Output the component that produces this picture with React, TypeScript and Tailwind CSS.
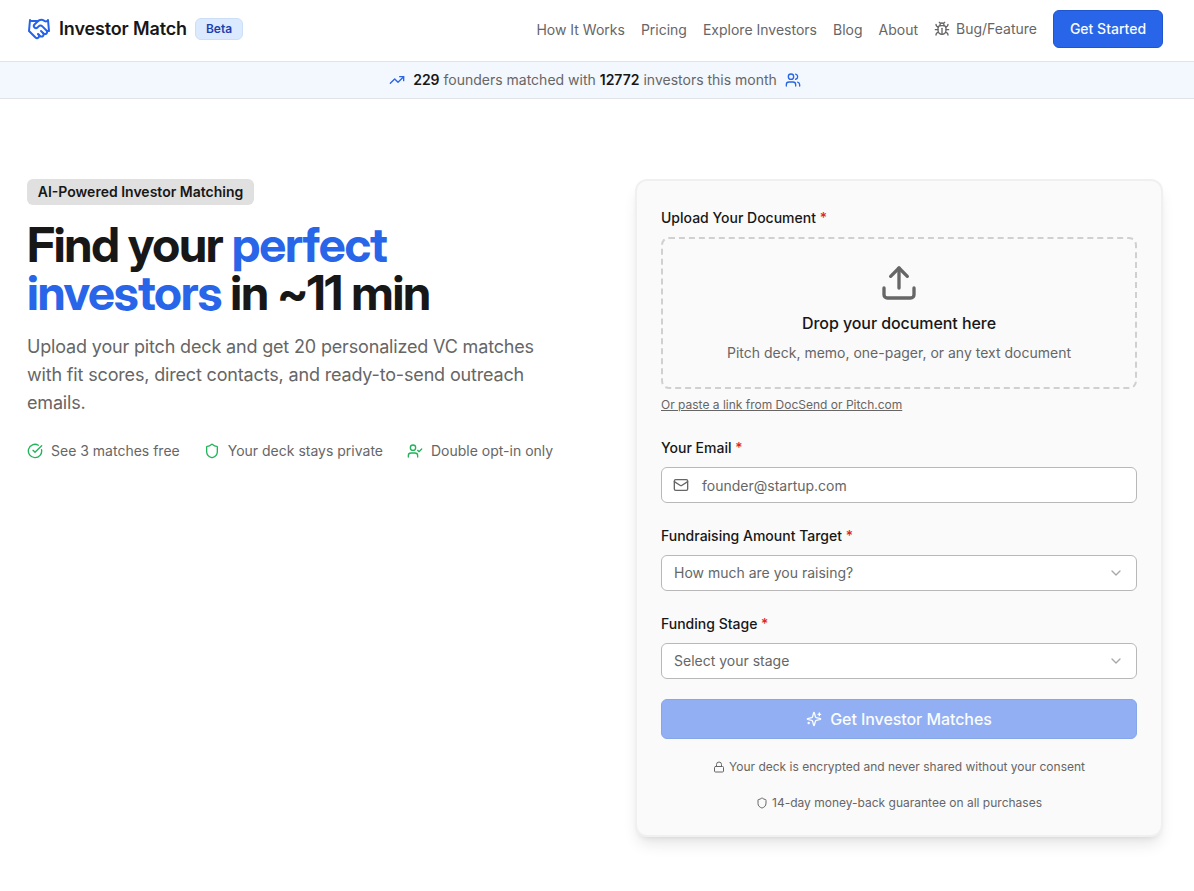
import React from "react";
import {
  ChevronDown,
  CircleCheckBig,
  Handshake,
  Lock,
  Mail,
  Shield,
  TrendingUp,
  Upload,
  UserCheck,
  Users,
} from "lucide-react";

const links = ["How It Works", "Pricing", "Explore Investors", "Blog", "About"];

function StrokeIcon({ paths }: { paths: string[] }) {
  return (
    <svg
      viewBox="0 0 24 24"
      fill="none"
      stroke="currentColor"
      strokeWidth="2"
      strokeLinecap="round"
      strokeLinejoin="round"
      className="size-4 shrink-0"
    >
      {paths.map((d) => (
        <path key={d} d={d} />
      ))}
    </svg>
  );
}

const bugPaths = [
  "m8 2 1.88 1.88",
  "M14.12 3.88 16 2",
  "M9 7.13v-1a3.003 3.003 0 1 1 6 0v1",
  "M12 20c-3.3 0-6-2.7-6-6v-3a4 4 0 0 1 4-4h4a4 4 0 0 1 4 4v3c0 3.3-2.7 6-6 6",
  "M12 20v-9",
  "M6.53 9C4.6 8.8 3 7.1 3 5",
  "M6 13H2",
  "M3 21c0-2.1 1.7-3.9 3.8-4",
  "M20.97 5c0 2.1-1.6 3.8-3.5 4",
  "M22 13h-4",
  "M17.2 17c2.1.1 3.8 1.9 3.8 4",
];

const sparklePaths = [
  "M9.937 15.5A2 2 0 0 0 8.5 14.063l-6.135-1.582a.5.5 0 0 1 0-.962L8.5 9.936A2 2 0 0 0 9.937 8.5l1.582-6.135a.5.5 0 0 1 .963 0L14.063 8.5A2 2 0 0 0 15.5 9.937l6.135 1.581a.5.5 0 0 1 0 .964L15.5 14.063a2 2 0 0 0-1.437 1.437l-1.582 6.135a.5.5 0 0 1-.963 0z",
  "M20 3v4",
  "M22 5h-4",
  "M4 17v2",
  "M5 18H3",
];

function Header() {
  return (
    <header className="flex h-[62px] items-center justify-between border-b border-[#dfe3e8] pr-[31px] pb-[3px] pl-[27px]">
      <div className="flex items-center gap-2">
        <Handshake className="size-6 text-[#2563eb]" strokeWidth={2} />
        <span className="text-lg font-semibold tracking-[-0.14px]">Investor Match</span>
        <span className="flex h-[22px] items-center rounded-md border border-[#cddff7] bg-[#dbeafe] px-2.5 text-xs font-semibold text-[#1e40af]">
          Beta
        </span>
      </div>
      <nav className="flex items-center gap-4 text-sm text-[#666]">
        {links.map((l) => (
          <a key={l} className="pt-0.5">
            {l}
          </a>
        ))}
        <a className="flex items-center gap-1.5">
          <StrokeIcon paths={bugPaths} />
          Bug/Feature
        </a>
        <button className="h-[38px] w-[110px] rounded-md border border-[#1f56cf] bg-[#2865e8] text-sm font-medium text-[#f8fafc]">
          Get Started
        </button>
      </nav>
    </header>
  );
}

function Stats() {
  return (
    <div className="flex h-[37px] items-center justify-center gap-2 border-b border-[#dfe3e8] bg-[#f3f7fe] pr-1 text-sm text-[#666]">
      <TrendingUp className="size-4 text-[#2865e8]" />
      <span>
        <b className="font-semibold text-[#171717]">229</b> founders matched with{" "}
        <b className="font-semibold text-[#171717]">12772</b> investors this month
      </span>
      <Users className="size-4 text-[#2865e8]" />
    </div>
  );
}

function Hero() {
  return (
    <section className="w-[528px]">
      <div className="flex h-[26px] w-[227px] items-center justify-center rounded-md bg-[#e0e0e0] text-sm font-semibold">
        AI-Powered Investor Matching
      </div>
      <h1 className="mt-4 font-['Inter_Display',Inter,sans-serif] text-5xl leading-[48px] font-bold tracking-[-0.025em]">
        Find your <span className="text-[#2865e8]">perfect</span>
        <br />
        <span className="text-[#2865e8]">investors</span> in ~11 min
      </h1>
      <p className="mt-4 text-lg leading-7 tracking-[-0.165px] text-[#666]">
        Upload your pitch deck and get 20 personalized VC matches
        <br />
        with fit scores, direct contacts, and ready-to-send outreach
        <br />
        emails.
      </p>
      <ul className="mt-6 flex gap-6 text-sm whitespace-nowrap text-[#666]">
        <li className="flex items-center gap-2">
          <CircleCheckBig className="size-4 text-[#22b35a]" />
          See 3 matches free
        </li>
        <li className="flex items-center gap-2">
          <Shield className="size-4 text-[#22b35a]" />
          Your deck stays private
        </li>
        <li className="flex items-center gap-2">
          <UserCheck className="size-4 text-[#22b35a]" />
          Double opt-in only
        </li>
      </ul>
    </section>
  );
}

function Label({ children }: { children: React.ReactNode }) {
  return (
    <div className="text-sm leading-5 font-medium">
      {children} <span className="text-[#dc2626]">*</span>
    </div>
  );
}

function Select({ text }: { text: string }) {
  return (
    <div className="mt-[9px] flex h-9 items-center justify-between rounded-md border border-[#b8b8b8] bg-white px-3 text-sm text-[#666]">
      {text}
      <ChevronDown className="size-4 text-[#a8a8a8]" />
    </div>
  );
}

function MatchForm() {
  return (
    <section className="h-[658px] w-[528px] rounded-xl border-2 border-[#f0f0f0] bg-[#fafafa] px-6 pt-[27px] shadow-[0_10px_15px_-3px_rgba(0,0,0,0.1),0_4px_6px_-4px_rgba(0,0,0,0.1)]">
      <Label>Upload Your Document</Label>
      <div className="mt-[9px] flex h-[152px] flex-col items-center rounded-lg border-2 border-dashed border-[#d0d0d0] pt-6">
        <Upload className="size-10 text-[#666]" />
        <div className="mt-2 text-base leading-6 font-medium tracking-[-0.07px]">
          Drop your document here
        </div>
        <div className="mt-2 text-sm leading-5 text-[#666]">
          Pitch deck, memo, one-pager, or any text document
        </div>
      </div>
      <div className="mt-2 text-xs leading-4 text-[#666] underline">
        Or paste a link from DocSend or Pitch.com
      </div>
      <div className="mt-[25px]">
        <Label>Your Email</Label>
        <div className="mt-[9px] flex h-9 items-center gap-[13px] rounded-md border border-[#b8b8b8] bg-white px-[11px] text-sm text-[#666]">
          <Mail className="size-4" />
          <span className="pt-0.5">founder@startup.com</span>
        </div>
      </div>
      <div className="mt-[23px]">
        <Label>Fundraising Amount Target</Label>
        <Select text="How much are you raising?" />
      </div>
      <div className="mt-[23px]">
        <Label>Funding Stage</Label>
        <Select text="Select your stage" />
      </div>
      <button className="mt-5 flex h-10 w-full items-center justify-center gap-2 rounded-md border border-[#86a6ea] bg-[#91aff2] text-base font-medium tracking-[-0.07px] text-[#fafcff]">
        <StrokeIcon paths={sparklePaths} />
        Get Investor Matches
      </button>
      <div className="mt-5 flex items-center justify-center gap-1 text-xs leading-4 text-[#666]">
        <Lock className="size-3" />
        Your deck is encrypted and never shared without your consent
      </div>
      <div className="mt-5 flex items-center justify-center gap-1 text-xs leading-4 text-[#666]">
        <Shield className="size-3" />
        14-day money-back guarantee on all purchases
      </div>
    </section>
  );
}

export default function App() {
  return (
    <div className="h-[891px] overflow-hidden bg-white font-[Inter,sans-serif] text-[#171717]">
      <Header />
      <Stats />
      <main className="flex justify-between pt-20 pr-[31px] pl-[27px]">
        <Hero />
        <MatchForm />
      </main>
    </div>
  );
}
